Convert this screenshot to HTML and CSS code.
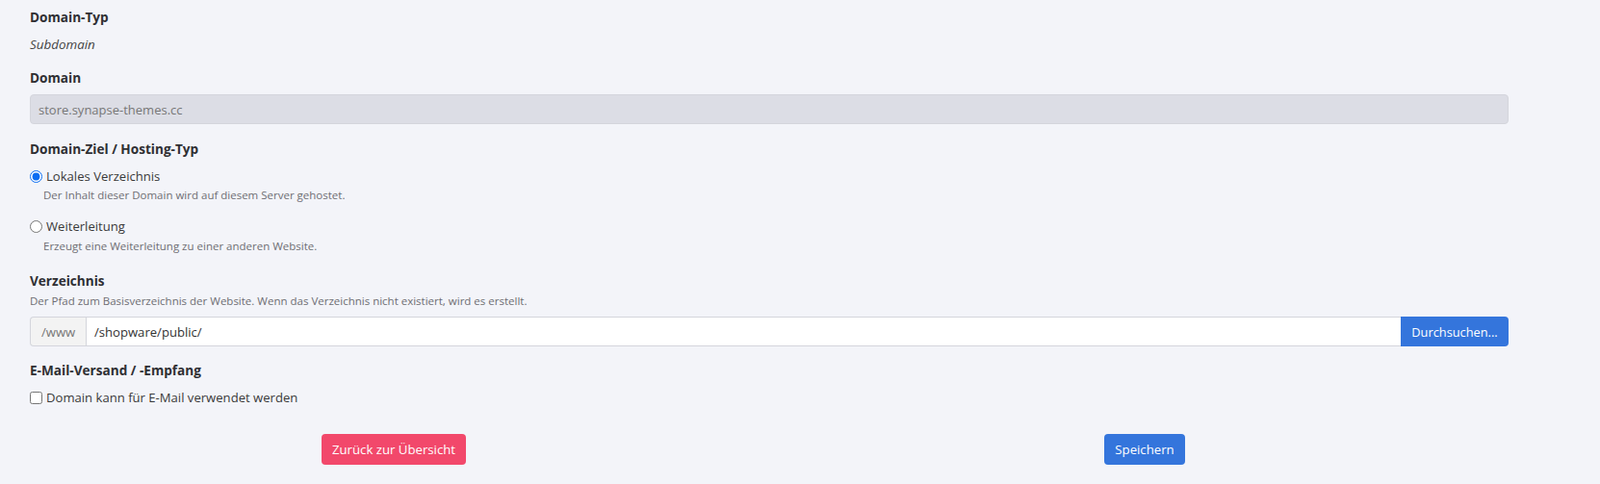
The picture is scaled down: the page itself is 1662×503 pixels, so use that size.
FILE: index.html
```html
<!DOCTYPE html>
<html lang="de">
<head>
<meta charset="utf-8">
<link rel="stylesheet" href="styles.css">
</head>
<body>
<div class="container">
  <div class="label first">Domain-Typ</div>
  <div class="static">Subdomain</div>

  <div class="label l-domain">Domain</div>
  <input class="field disabled" type="text" value="store.synapse-themes.cc" disabled>

  <div class="label l-ziel">Domain-Ziel / Hosting-Typ</div>
  <label class="check r1"><input type="radio" name="t" checked> Lokales Verzeichnis</label>
  <div class="help h1">Der Inhalt dieser Domain wird auf diesem Server gehostet.</div>
  <label class="check r2"><input type="radio" name="t"> Weiterleitung</label>
  <div class="help h2">Erzeugt eine Weiterleitung zu einer anderen Website.</div>

  <div class="label l-dir">Verzeichnis</div>
  <div class="help h3">Der Pfad zum Basisverzeichnis der Website. Wenn das Verzeichnis nicht existiert, wird es erstellt.</div>
  <div class="group">
    <span class="prefix">/www</span>
    <input class="gfield" type="text" value="/shopware/public/">
    <button class="btn blue gbtn">Durchsuchen...</button>
  </div>

  <div class="label l-mail">E-Mail-Versand / -Empfang</div>
  <label class="check c1"><input type="checkbox"> Domain kann für E-Mail verwendet werden</label>

  <div class="actions">
    <div class="col"><button class="btn red">Zurück zur Übersicht</button></div>
    <div class="col"><button class="btn blue">Speichern</button></div>
  </div>
</div>
</body>
</html>
```
FILE: styles.css
```css
* { box-sizing: border-box; }
html, body { margin: 0; padding: 0; }
body {
  background: #f3f4f9;
  font-family: "Open Sans", "Noto Sans", sans-serif;
  font-size: 13.1px;
  color: #333;
  height: 503px;
  overflow: hidden;
}
.container {
  padding: 8px 95px 0 31px;
}
.label {
  font-weight: 700;
  font-size: 13.6px;
  line-height: 20px;
  color: #2f2f33;
}
.static {
  font-style: italic;
  line-height: 20px;
  margin-top: 8px;
  font-size: 13.4px;
  color: #444;
}
.l-domain { margin-top: 15px; }
.field {
  display: block;
  width: 100%;
  height: 31px;
  margin-top: 7px;
  border: 1px solid #d4d5dc;
  border-radius: 4px;
  padding: 0 8px;
  font-family: inherit;
  font-size: 13px;
  color: #777;
}
.disabled { background: #dcdde5; }
.l-ziel { margin-top: 16px; }
.check {
  display: flex;
  align-items: center;
  gap: 4px;
  line-height: 20px;
  font-size: 13.1px;
  color: #3a3a3a;
}
.check input {
  margin: 0;
  width: 13px;
  height: 13px;
  accent-color: #0b6cf2;
}
.r1 { margin-top: 8px; }
.r2 { margin-top: 13px; }
.c1 { margin-top: 8px; }
.help {
  font-size: 11.5px;
  line-height: 18px;
  color: #6e6e73;
}
.h1, .h2 { padding-left: 14px; }
.h1 { margin-top: 1px; }
.h2 { margin-top: 2px; }
.l-dir { margin-top: 17px; }
.h3 { margin-top: 2px; }
.group {
  display: flex;
  height: 31px;
  margin-top: 7px;
}
.prefix {
  display: flex;
  align-items: center;
  padding: 0 11px;
  width: 58px;
  background: #f3f3f3;
  border: 1px solid #d4d5dc;
  border-right: 0;
  border-radius: 4px 0 0 4px;
  color: #777;
  font-size: 13.1px;
}
.gfield {
  flex: 1;
  border: 1px solid #d4d5dc;
  border-right: 0;
  padding: 0 8px;
  font-family: inherit;
  font-size: 13.1px;
  color: #333;
  background: #fff;
  outline: none;
}
.btn {
  border: 0;
  border-radius: 4px;
  color: #fff;
  font-family: inherit;
  font-size: 13.2px;
  height: 32px;
  padding: 0 11px;
}
.blue { background: #3475dc; }
.red { background: #f2486b; }
.gbtn {
  height: 31px;
  width: 112px;
  border-radius: 0 4px 4px 0;
  padding: 0;
  font-size: 12.8px;
}
.l-mail { margin-top: 15px; }
.actions {
  display: flex;
  margin: 28px -12px 0 -12px;
}
.col {
  flex: 1;
  text-align: center;
}
```
